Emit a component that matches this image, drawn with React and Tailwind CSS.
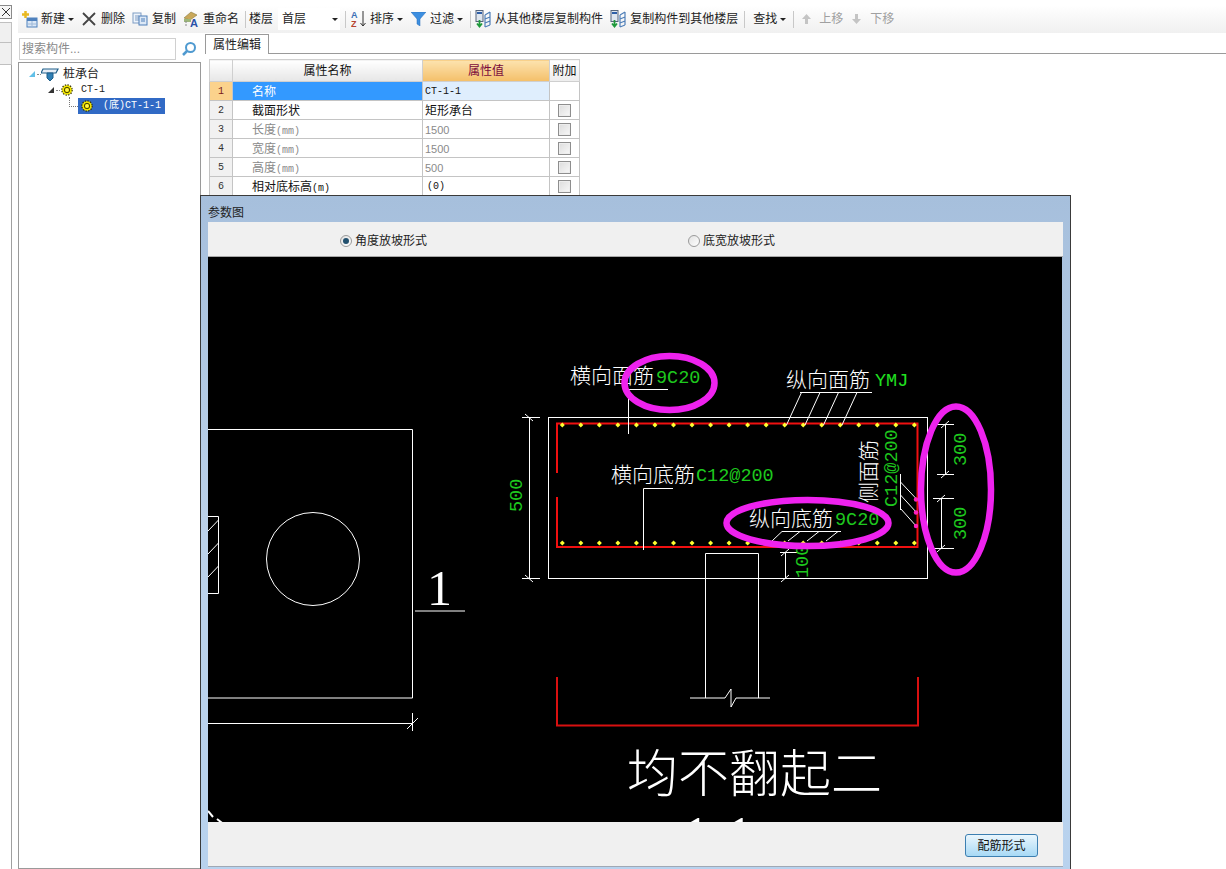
import React from 'react';

const SANS = "font-['Liberation_Sans','Noto_Sans_CJK_SC',sans-serif]";
const MONO = "font-['Liberation_Mono','Noto_Sans_CJK_SC',monospace]";

function Caret() {
  return <span className="ml-[3px] w-0 h-0 border-x-[3px] border-x-transparent border-t-[3px] border-t-[#222]" />;
}

function Sep({ ml = 'ml-[6px]' }) {
  return <span className={`${ml} w-px h-[17px] bg-[#c8c8c8]`} />;
}

function NewIcon() {
  return (
    <svg width="16" height="18" viewBox="0 0 16 18">
      <rect x="5" y="8" width="10" height="9" fill="#dce8f6" stroke="#4f81bd" />
      <rect x="5" y="8" width="10" height="3" fill="#4f81bd" />
      <path d="M6 14h8M10 11v6" stroke="#9db8d8" />
      <path d="M3.500 1v7M0 4.500h7" stroke="#e8b820" strokeWidth="2.500" />
    </svg>
  );
}

function DeleteIcon() {
  return (
    <svg width="14" height="14" viewBox="0 0 14 14">
      <path d="M1 1l12 12M13 1L1 13" stroke="#444" strokeWidth="1.800" />
    </svg>
  );
}

function CopyIcon() {
  return (
    <svg width="16" height="14" viewBox="0 0 16 14">
      <rect x="1" y="1" width="8" height="10" fill="#eef4fb" stroke="#7f9dc4" />
      <path d="M3 4h4M3 6h4M3 8h4" stroke="#7f9dc4" />
      <rect x="7" y="4" width="8" height="9" fill="#dce8f6" stroke="#4f7fb8" />
      <path d="M9 7h4M9 9h4" stroke="#4f7fb8" />
    </svg>
  );
}

function RenameIcon() {
  return (
    <svg width="17" height="18" viewBox="0 0 17 18">
      <path d="M1 8l7-6 6 3-7 5z" fill="#c9a85a" stroke="#8a7a3a" strokeWidth="0.600" />
      <path d="M1 9h7v3H1z" fill="#9cb67a" />
      <path d="M2 15h2M2 12h2" stroke="#888" />
      <text x="7" y="17" fontSize="11" fontWeight="700" fill="#2a52a8" className={SANS}>A</text>
    </svg>
  );
}

function SortIcon() {
  return (
    <svg width="16" height="18" viewBox="0 0 16 18">
      <text x="0" y="8" fontSize="9" fontWeight="700" fill="#3a6fb5" className={SANS}>A</text>
      <text x="0" y="17" fontSize="9" fontWeight="700" fill="#b5432f" className={SANS}>Z</text>
      <path d="M12 1v15M9.500 13l2.500 3 2.500-3" stroke="#333" fill="none" />
    </svg>
  );
}

function FilterIcon() {
  return (
    <svg width="15" height="14" viewBox="0 0 15 14">
      <path d="M0 0h15L9 7v7l-3-2V7z" fill="#3d8fe0" stroke="#2a6fb8" strokeWidth="0.500" />
    </svg>
  );
}

function FloorCopyIcon() {
  return (
    <svg width="16" height="18" viewBox="0 0 16 18">
      <rect x="1" y="0.500" width="7" height="11" fill="#dfe6ef" stroke="#56657c" />
      <rect x="2" y="2" width="5" height="2" fill="#2e5fa8" />
      <path d="M4.500 10v6M2 13.500l2.500 3 2.500-3" stroke="#1f9a3c" strokeWidth="1.800" fill="none" />
      <path d="M10 5l5-3M10 9l5-2M10 13l5-2M10 17l5-2M10 5v12M15 2v13" stroke="#4f7fb8" strokeWidth="1.200" fill="none" />
    </svg>
  );
}

function MoveIcon({ down }) {
  return (
    <svg width="9" height="10" viewBox="0 0 9 10">
      <path d={down ? 'M3 0h3v5h3L4.500 10 0 5h3z' : 'M3 10h3V5h3L4.500 0 0 5h3z'} fill="#c4c4c4" />
    </svg>
  );
}

function GearIcon() {
  return (
    <svg width="12" height="12" viewBox="0 0 12 12">
      <circle cx="6" cy="6" r="5" fill="#f2e600" />
      <circle cx="6" cy="6" r="5.200" fill="none" stroke="#3a3500" strokeWidth="1.200" strokeDasharray="1.400 1.300" />
      <circle cx="6" cy="6" r="2.700" fill="none" stroke="#4a4400" strokeWidth="1" />
      <circle cx="6" cy="6" r="1.400" fill="#fff25a" />
    </svg>
  );
}

function CapIcon() {
  return (
    <svg width="18" height="15" viewBox="0 0 18 15">
      <path d="M2 2h15l-2 4H0z" fill="#e8eef6" stroke="#1f5f8a" strokeWidth="1.200" />
      <path d="M6 6h6v5l-3 3-3-3z" fill="#2f7fb5" stroke="#1f5f8a" />
    </svg>
  );
}

function Check() {
  return <span className="block mx-auto w-[13px] h-[13px] border border-[#8e8e8e] bg-gradient-to-br from-[#dcdcdc] to-[#f8f8f8] shadow-[inset_0_0_0_1px_#ededed]" />;
}

const ROWS = [
  { n: 1, name: '名称', value: 'CT-1-1', selected: true },
  { n: 2, name: '截面形状', value: '矩形承台', check: true },
  { n: 3, name: '长度', unit: '(mm)', value: '1500', check: true, dim: true },
  { n: 4, name: '宽度', unit: '(mm)', value: '1500', check: true, dim: true },
  { n: 5, name: '高度', unit: '(mm)', value: '500', check: true, dim: true },
  { n: 6, name: '相对底标高', unit: '(m)', value: '(0)', check: true, mono: true },
];

function PropertyTable() {
  return (
    <table className="ml-[4px] mt-[5px] w-[370px] table-fixed border-collapse text-[12px] leading-none">
      <colgroup>
        <col className="w-[23px]" />
        <col className="w-[190px]" />
        <col className="w-[127px]" />
        <col className="w-[30px]" />
      </colgroup>
      <thead>
        <tr className="h-[22px]">
          <th className="border border-[#cfcfcf] bg-gradient-to-b from-white to-[#e6e6e6]" />
          <th className="border border-[#cfcfcf] bg-gradient-to-b from-white to-[#e6e6e6] font-normal text-[#111]">属性名称</th>
          <th className="border border-[#cfcfcf] bg-gradient-to-b from-[#fce3ae] to-[#f4bf68] font-normal text-[#7a0a3c]">属性值</th>
          <th className="border border-[#cfcfcf] bg-gradient-to-b from-white to-[#ededed] font-normal text-[#111]">附加</th>
        </tr>
      </thead>
      <tbody>
        {ROWS.map((row) => (
          <tr key={row.n} className="h-[19px]">
            <td className={`border border-[#c4c4c4] pt-[2px] pb-0 text-center text-[10px] ${MONO} ${row.selected ? 'bg-[#fbd28c] text-[#7a1a1a]' : 'bg-[#f1f1f1] text-[#333]'}`}>{row.n}</td>
            <td className={`border border-[#c4c4c4] pt-[2px] pb-0 pl-[19px] whitespace-nowrap ${row.selected ? 'bg-[#3399ff] text-white' : row.dim ? 'text-[#8a8a8a]' : 'text-[#111]'}`}>
              {row.name}
              {row.unit && <span className={`text-[10px] ${MONO}`}>{row.unit}</span>}
            </td>
            <td className={`border border-[#c4c4c4] pt-[2px] pb-0 pl-[2px] whitespace-nowrap ${row.selected ? 'bg-[#dfeefd]' : ''} ${row.dim ? 'text-[#8a8a8a] text-[11px]' : 'text-[#111]'} ${row.selected || row.mono ? `text-[10px] ${MONO}` : ''} ${row.mono ? 'pl-[4px]' : ''}`}>{row.value}</td>
            <td className="border border-[#c4c4c4]">{row.check && <Check />}</td>
          </tr>
        ))}
      </tbody>
    </table>
  );
}

// yellow bar markers along the top and bottom of the red stirrup
const DOTS = Array.from({ length: 20 }, (_, i) => 562.3 + i * 18.53);

function Drawing() {
  const white = { stroke: '#fff', strokeWidth: 1, fill: 'none' };
  const cjk = { fontSize: 21, fontWeight: 300, fill: '#fff', className: SANS };
  const green = { fontSize: 18.500, fill: '#1ec81e', className: MONO };
  return (
    <svg className="block w-[854px] h-[565px]" viewBox="208 257 854 565">
      <rect x="208" y="257" width="854" height="565" fill="#000" />

      {/* plan view on the left */}
      <path d="M208 429.500H412.500V698H208" {...white} />
      <circle cx="313" cy="559" r="46.500" {...white} />
      <path d="M208 516.500H218.500V593.500H208M208 531L218.500 520M208 554L218.500 543M208 577L218.500 566" {...white} />
      <path d="M208 723.500H412.500M412.500 713V731M407 729L418 718M415 611H465" {...white} />
      <text x="427" y="605" fontSize="50" fill="#fff" className="font-['Liberation_Serif',serif]">1</text>
      <path d="M208 811L213 817M217 819L226 826" stroke="#fff" strokeWidth="2" />

      {/* section */}
      <rect x="548.500" y="417.500" width="379" height="161" {...white} />
      <path d="M557 473V423.500H917.500V547H557V497" stroke="#f01010" strokeWidth="2" fill="none" />
      {DOTS.map((x) => (
        <g key={x} fill="#ffff30">
          <path d={`M${x} 422.500l2.500 2.500-2.500 2.500-2.500-2.500z`} />
          <path d={`M${x} 540.500l2.500 2.500-2.500 2.500-2.500-2.500z`} />
        </g>
      ))}
      <path d="M705.500 698V553.500H758.500V698" {...white} />
      <path d="M690 698H725L731 689V707L736 698H770" {...white} />
      <path d="M557 677V725.500H918V677" stroke="#d81010" strokeWidth="2" fill="none" />

      {/* leader lines */}
      <path d="M628.500 389.500H668M628.500 389.500V434" {...white} />
      <path d="M800 392.500H872M801.500 392.500L786.500 425M820 392.500L805 425M838.500 392.500L823.500 425M857 392.500L842 425" {...white} />
      <path d="M643.500 488.500H673M643.500 488.500V550" {...white} />
      <path d="M782 531.500H841M782 531.500L772 541M800 531.500L788 541M819 531.500L807 541M838 531.500L826 541" {...white} />
      <path d="M900.500 474V510M900.500 482L917 499.500M900.500 495L917 513M900.500 508.500L917 527" {...white} />
      {[499.500, 512.500, 526].map((y) => (
        <circle key={y} cx="916" cy={y} r="2.200" fill="#ff20c0" />
      ))}

      {/* dimensions */}
      <path d="M522 417.500H540M522 578.500H540M529.500 417.500V578.500M525 414L533 421M525 575L533 582" {...white} />
      <path d="M937 424.500H954M937 474.500H954M945.500 424.500V474.500M941 478L949 471M941 428L949 421" {...white} />
      <path d="M933 498.500H954M933 548.500H954M941.500 498.500V548.500M937 552L945 545M937 502L945 495" {...white} />
      <path d="M780 552.500H797M780 578.500H797M785.500 552.500V578.500M781 556L789 549M781 582L789 575" {...white} />

      {/* labels */}
      <text x="570" y="383" {...cjk}>横向面筋</text>
      <text x="656" y="383" {...green}>9C20</text>
      <text x="786" y="387" {...cjk}>纵向面筋</text>
      <text x="875" y="386" {...green} fill="#20e020">YMJ</text>
      <text x="611" y="482" {...cjk}>横向底筋</text>
      <text x="696" y="481" {...green}>C12@200</text>
      <text x="749" y="526" {...cjk}>纵向底筋</text>
      <text x="835" y="525" {...green}>9C20</text>
      <text transform="translate(876 503) rotate(-90)" {...cjk}>侧面筋</text>
      <text transform="translate(897 507) rotate(-90)" {...green}>C12@200</text>
      <text transform="translate(522 512) rotate(-90)" {...green}>500</text>
      <text transform="translate(966 466) rotate(-90)" {...green}>300</text>
      <text transform="translate(966 540) rotate(-90)" {...green}>300</text>
      <text transform="translate(808 578) rotate(-90)" {...green}>100</text>

      <text x="627" y="792" fontSize="51" fontWeight="300" fill="#fff" className={SANS}>均不翻起二</text>
      <text x="718" y="853" fontSize="52" fill="#fff" textAnchor="middle" className="font-['Liberation_Serif',serif]">1-1</text>

      {/* hand-drawn markup */}
      <ellipse cx="669.500" cy="383" rx="45" ry="27" fill="none" stroke="#ee22ee" strokeWidth="6.500" />
      <ellipse cx="807.500" cy="523" rx="81" ry="23" fill="none" stroke="#ee22ee" strokeWidth="6.500" />
      <ellipse cx="956" cy="489.500" rx="35" ry="83" fill="none" stroke="#ee22ee" strokeWidth="6.500" />
    </svg>
  );
}

function Radio({ checked, label, className }) {
  return (
    <div className={`flex items-center gap-[3px] ${className}`}>
      <span className="flex items-center justify-center w-[12px] h-[12px] rounded-full border border-[#9a9a9a] bg-gradient-to-br from-[#e2e2e2] to-white">
        {checked && <span className="w-[6px] h-[6px] rounded-full bg-[#22506e]" />}
      </span>
      <span className="text-[12px] leading-none text-[#222]">{label}</span>
    </div>
  );
}

export default function App() {
  return (
    <div className={`relative w-[1226px] h-[869px] overflow-hidden bg-white flex text-[#222] ${SANS}`}>
      {/* narrow docked strip */}
      <div className="w-[18px] shrink-0 pt-[5px]">
        <div className="w-[12px] h-[14px] border border-l-0 border-[#8a8a8a] flex items-center justify-center bg-[#f6f6f6]">
          <svg width="8" height="8" viewBox="0 0 8 8"><path d="M0 0l8 8M8 0L0 8" stroke="#333" /></svg>
        </div>
        <div className="mt-[3px] w-[12px] h-[21px] bg-[#f0f0f0] border-y border-r border-[#c0c0c0]" />
        <div className="w-[12px] h-[22px] bg-[#f0f0f0] border-b border-r border-[#c0c0c0]" />
        <div className="w-[12px] h-[804px] bg-white border-r border-[#a0a0a0]" />
      </div>

      <div className="flex-1 min-w-0 flex flex-col">
        {/* toolbar */}
        <div className="mt-[5px] h-[28px] shrink-0 flex items-center pl-[4px] text-[12px] leading-none text-[#222] whitespace-nowrap bg-gradient-to-b from-white to-[#f0f0f0]">
          <NewIcon />
          <span className="ml-[3px]">新建</span>
          <Caret />
          <span className="ml-[8px]"><DeleteIcon /></span>
          <span className="ml-[5px]">删除</span>
          <span className="ml-[7px]"><CopyIcon /></span>
          <span className="ml-[4px]">复制</span>
          <span className="ml-[7px]"><RenameIcon /></span>
          <span className="ml-[3px]">重命名</span>
          <Sep />
          <span className="ml-[3px]">楼层</span>
          <div className="ml-[5px] w-[62px] h-[22px] bg-white flex items-center justify-between pl-[4px] pr-[2px]">
            <span>首层</span>
            <Caret />
          </div>
          <Sep ml="ml-[5px]" />
          <span className="ml-[5px]"><SortIcon /></span>
          <span className="ml-[3px]">排序</span>
          <Caret />
          <span className="ml-[8px]"><FilterIcon /></span>
          <span className="ml-[4px]">过滤</span>
          <Caret />
          <Sep ml="ml-[7px]" />
          <span className="ml-[4px]"><FloorCopyIcon /></span>
          <span className="ml-[4px]">从其他楼层复制构件</span>
          <span className="ml-[7px]"><FloorCopyIcon /></span>
          <span className="ml-[4px]">复制构件到其他楼层</span>
          <Sep />
          <span className="ml-[8px]">查找</span>
          <Caret />
          <Sep ml="ml-[7px]" />
          <span className="ml-[8px]"><MoveIcon /></span>
          <span className="ml-[8px] text-[#a0a0a0]">上移</span>
          <span className="ml-[9px]"><MoveIcon down /></span>
          <span className="ml-[9px] text-[#a0a0a0]">下移</span>
        </div>

        <div className="flex-1 min-h-0 flex">
          {/* component tree */}
          <div className="w-[183px] shrink-0 flex flex-col">
            <div className="mt-[4px] h-[24px] flex items-center">
              <div className="w-[157px] h-[22px] ml-px border border-[#d0d0d0] flex items-center pl-[2px] text-[12px] text-[#8a8a8a] bg-white">搜索构件...</div>
              <svg className="ml-[5px]" width="16" height="16" viewBox="0 0 16 16">
                <circle cx="9.500" cy="6.500" r="4.500" fill="none" stroke="#4f9ad0" strokeWidth="2" />
                <path d="M6 10l-4 4" stroke="#4f9ad0" strokeWidth="2.500" />
              </svg>
            </div>
            <div className="flex-1 border border-[#9a9a9a] mt-[1px] pt-[3px] text-[12px] leading-none bg-white">
              <div className="flex items-center h-[16px] pl-[10px]">
                <span className="w-0 h-0 border-l-[6px] border-l-transparent border-b-[6px] border-b-[#62c0e8]" />
                <span className="ml-[2px] w-[4px] border-b border-dotted border-[#888]" />
                <CapIcon />
                <span className="ml-[4px]">桩承台</span>
              </div>
              <div className="flex items-center h-[16px] pl-[29px]">
                <span className="w-0 h-0 border-l-[6px] border-l-transparent border-b-[6px] border-b-[#333]" />
                <span className="ml-[2px] w-[4px] border-b border-dotted border-[#888]" />
                <span className="ml-px"><GearIcon /></span>
                <span className={`ml-[8px] text-[10px] ${MONO}`}>CT-1</span>
              </div>
              <div className="flex items-center h-[16px] pl-[50px]">
                <span className="w-[9px] h-[10px] mb-[8px] border-l border-b border-dotted border-[#777]" />
                <div className="flex items-center w-[87px] h-[16px] bg-[#316ac5] text-white pl-[3px]">
                  <GearIcon />
                  <span className={`ml-[10px] text-[10px] ${MONO}`}>(底)CT-1-1</span>
                </div>
              </div>
            </div>
          </div>

          {/* property grid */}
          <div className="flex-1 min-w-0 pl-[4px]">
            <div className="h-[21px] border-b border-[#9a9a9a] pt-px">
              <div className="w-[64px] h-[20px] border border-b-0 border-[#9a9a9a] bg-white flex items-center justify-center text-[12px] leading-none">属性编辑</div>
            </div>
            <PropertyTable />
          </div>
        </div>
      </div>

      {/* floating 参数图 dialog */}
      <div className="absolute left-[200px] top-[195px] w-[871px] h-[674px] flex flex-col border-t border-x border-[#3a3a3a] bg-gradient-to-b from-[#a6bfdc] via-[#bcd2ea] to-[#b8d2ee]">
        <div className="h-[26px] shrink-0 pl-[7px] pt-[8px] flex items-center text-[12px] leading-none text-[#222]">参数图</div>
        <div className="mx-[7px] flex flex-col">
          <div className="h-[35px] pt-[3px] flex items-center bg-[#f0f0f0] border-b border-[#a8a8a8]">
            <Radio checked label="角度放坡形式" className="ml-[132px]" />
            <Radio label="底宽放坡形式" className="ml-[261px]" />
          </div>
          <Drawing />
          <div className="h-[45px] pt-[12px] flex items-start justify-end pr-[25px] bg-[#f0f0f0] border-b border-[#a0a8b4]">
            <button className="w-[73px] h-[23px] rounded-[3px] border border-[#3c7fb1] bg-gradient-to-b from-[#eaf6fd] to-[#a7d9f5] text-[12px] leading-none text-[#111]">配筋形式</button>
          </div>
        </div>
      </div>
    </div>
  );
}
